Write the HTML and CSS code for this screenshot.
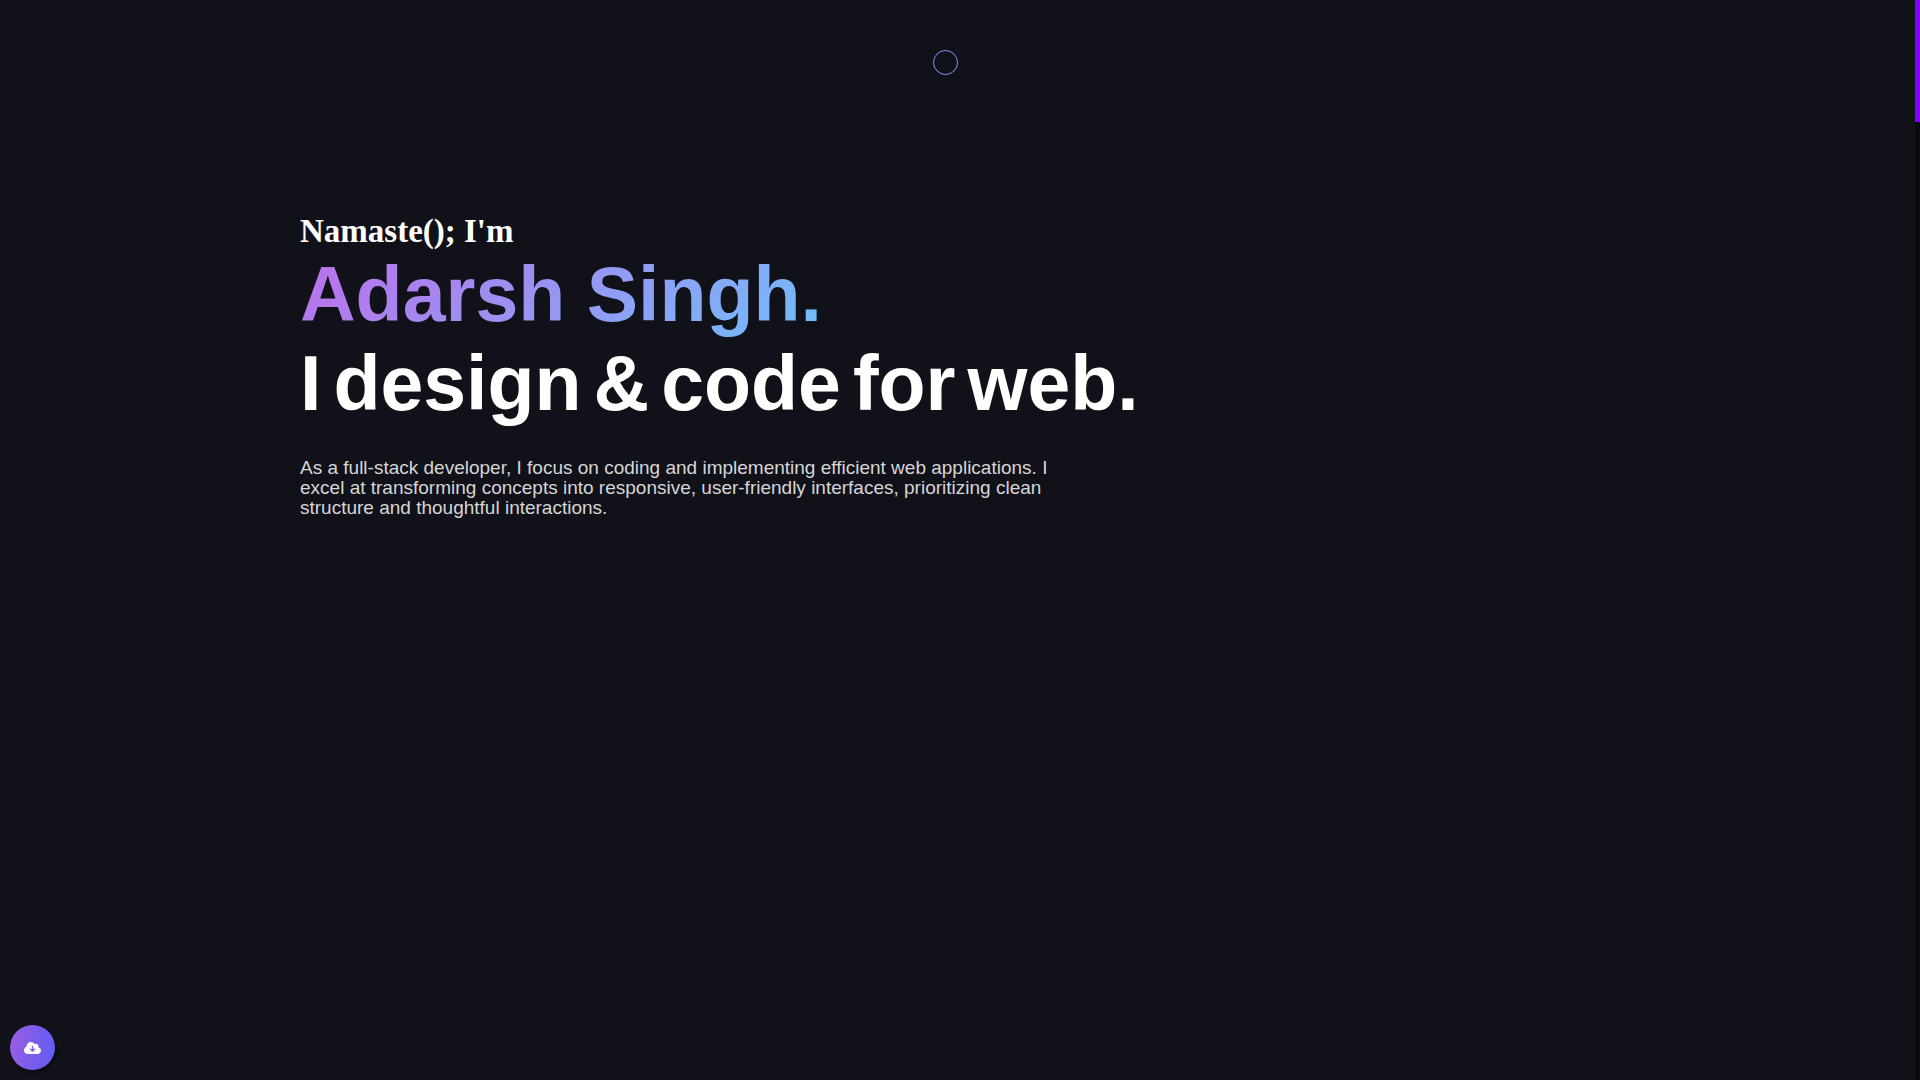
FILE: index.html
```html
<!DOCTYPE html>
<html lang="en">
<head>
<meta charset="utf-8">
<meta name="viewport" content="width=device-width, initial-scale=1">
<title>Adarsh Singh</title>
<link rel="stylesheet" href="styles.css">
</head>
<body>
<div class="cursor" aria-hidden="true"></div>
<main class="hero">
  <h1 class="intro">
    <span class="greeting">Namaste(); I'm</span>
    <span class="name">Adarsh Singh.</span>
    <span class="tagline"><span>I</span> <span>design</span> <span>&amp;</span> <span>code</span> <span>for</span> <span>web.</span></span>
  </h1>
  <p class="summary">As a full-stack developer, I focus on coding and implementing efficient web applications. I excel at transforming concepts into responsive, user-friendly interfaces, prioritizing clean structure and thoughtful interactions.</p>
</main>
<button class="download" type="button" aria-label="Download resume">
  <svg viewBox="0 0 640 512" width="17" height="14" aria-hidden="true"><path fill="#fff" d="M144 480C64.500 480 0 415.500 0 336c0-62.800 40.200-116.200 96.200-135.900C96.100 197.400 96 194.700 96 192c0-88.400 71.600-160 160-160 59.300 0 111 32.200 138.700 80.200C409.900 102 428.300 96 448 96c53 0 96 43 96 96 0 12.200-2.300 23.800-6.400 34.600C596 238.400 640 290.100 640 352c0 70.700-57.300 128-128 128H144zm79-167 80 80c9.400 9.400 24.600 9.400 33.900 0l80-80c9.400-9.400 9.400-24.600 0-33.900s-24.600-9.400-33.900 0l-39 39V184c0-13.300-10.700-24-24-24s-24 10.700-24 24v134.100l-39-39c-9.400-9.400-24.600-9.400-33.900 0s-9.400 24.600 0 33.900z"/></svg>
</button>
<div class="scroll-track" aria-hidden="true"><div class="scroll-thumb"></div></div>
</body>
</html>
```
FILE: styles.css
```css
* {
  box-sizing: border-box;
}

body {
  margin: 0;
  min-height: 100vh;
  background: #11111a;
  color: #fff;
  font-family: "Liberation Sans", Arial, sans-serif;
}

.hero {
  max-width: 1320px;
  margin: 0 auto;
  padding-top: 212px;
}

.intro {
  display: flex;
  flex-direction: column;
  align-items: flex-start;
  margin: 0;
  font-size: 77px;
  line-height: 89px;
}

.greeting {
  font-family: "Liberation Serif", "Times New Roman", serif;
  font-size: 33px;
  line-height: 38px;
}

.name {
  background: linear-gradient(135deg, #bd6fea, #70befa);
  background-clip: text;
  -webkit-background-clip: text;
  color: transparent;
}

.tagline {
  display: flex;
  flex-wrap: wrap;
  column-gap: 12px;
}

.summary {
  max-width: 780px;
  margin: 30px 0 0;
  color: #d6d6d6;
  font-size: 19px;
  line-height: 20px;
}

.cursor {
  position: fixed;
  top: 50px;
  left: calc(50% - 27px);
  width: 25px;
  height: 25px;
  border: 1px solid #7f9af5;
  border-radius: 50%;
}

.download {
  position: fixed;
  bottom: 10px;
  left: 10px;
  display: grid;
  place-items: center;
  width: 45px;
  height: 45px;
  padding: 0;
  border: 0;
  border-radius: 50%;
  background: linear-gradient(100deg, #9b5de5, #5e5cf2);
  box-shadow: 2px 2px 3px rgba(0, 0, 0, 0.4);
}

.scroll-track {
  position: fixed;
  top: 0;
  right: 0;
  bottom: 0;
  width: 5px;
  background: #0a0a0c;
}

.scroll-thumb {
  height: 122px;
  background: #8000ff;
}
```
